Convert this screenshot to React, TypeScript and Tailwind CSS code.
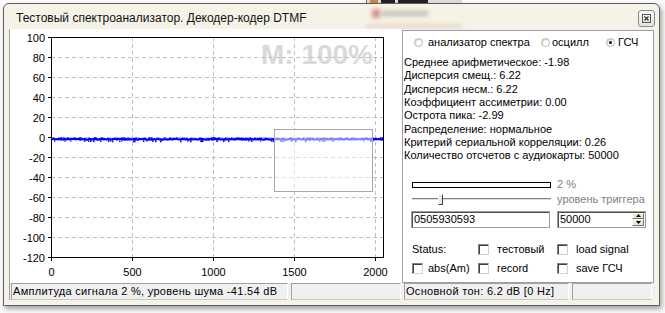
import React from 'react';

function rng(seed: number) {
  let s = seed >>> 0;
  return () => {
    s = (Math.imul(s, 1664525) + 1013904223) >>> 0;
    return s / 4294967296;
  };
}

function Chart() {
  const X0 = 42;
  const X1 = 374;
  const Y0 = 8;
  const xs = (v: number) => X0 + (v * (X1 - X0)) / 2048;
  const ys = (v: number) => Y0 + (100 - v);
  const yVals = [100, 80, 60, 40, 20, 0, -20, -40, -60, -80, -100, -120];
  const xVals = [0, 500, 1000, 1500, 2000];
  const r = rng(11);
  let d = '';
  const specks: { x: number; y: number; h: number }[] = [];
  for (let x = X0; x <= X1; x += 1) {
    const y = 110.2 + (r() - 0.5) * 0.9;
    d += (x === X0 ? 'M' : 'L') + x + ' ' + y.toFixed(2) + ' ';
    if (r() < 0.3) specks.push({ x, y: 110.2 + (r() < 0.5 ? -1.8 : 1.2), h: 1 + r() });
  }
  return (
    <svg width="393" height="254" className="block" style={{ fontFamily: '"Liberation Sans", Arial, sans-serif' }}>
      <rect x="0" y="0" width="393" height="254" fill="#ffffff" />
      <line x1="0.5" y1="0" x2="0.5" y2="254" stroke="#a0a0a0" />
      <text x="364" y="35" textAnchor="end" fontSize="28" fontWeight="bold" fill="#d9d9d9">
        M: 100%
      </text>
      {yVals.slice(1, -1).map((v) => (
        <line key={'h' + v} x1={X0} x2={X1} y1={ys(v) + 0.5} y2={ys(v) + 0.5} stroke="#c0c0c0" strokeDasharray="4 3" />
      ))}
      {xVals.slice(1).map((v) => (
        <line key={'v' + v} x1={Math.round(xs(v)) + 0.5} x2={Math.round(xs(v)) + 0.5} y1={Y0} y2={ys(-120)} stroke="#c0c0c0" strokeDasharray="4 3" />
      ))}
      <path d={d} fill="none" stroke="#0000ff" strokeWidth="2.2" />
      {specks.map((s, i) => (
        <rect key={i} x={s.x} y={s.y} width="1.5" height={s.h} fill="#0000ff" />
      ))}
      <rect x="265.5" y="100.5" width="98" height="62" fill="#ffffff" fillOpacity="0.5" stroke="#a8a8a8" />
      <rect x={X0 + 0.5} y={Y0 + 0.5} width={X1 - X0} height={ys(-120) - Y0} fill="none" stroke="#000000" />
      {yVals.map((v) => (
        <g key={'yl' + v}>
          <line x1={X0 - 3} x2={X0} y1={ys(v) + 0.5} y2={ys(v) + 0.5} stroke="#000" />
          <text x={X0 - 6} y={ys(v) + 4.5} textAnchor="end" fontSize="11" fill="#000">
            {v}
          </text>
        </g>
      ))}
      {xVals.map((v) => (
        <g key={'xl' + v}>
          <line x1={Math.round(xs(v)) + 0.5} x2={Math.round(xs(v)) + 0.5} y1={ys(-120)} y2={ys(-120) + 4} stroke="#000" />
          <text x={Math.round(xs(v)) + 0.5} y={247} textAnchor="middle" fontSize="11" fill="#000">
            {v}
          </text>
        </g>
      ))}
    </svg>
  );
}

function Radio({ checked }: { checked?: boolean }) {
  return (
    <span className="flex h-[9px] w-[9px] shrink-0 items-center justify-center rounded-full border border-[#b4b4b4] bg-white shadow-[inset_1px_1px_1px_#d6d6d6]">
      {checked && <span className="h-[3px] w-[3px] rounded-full bg-black" />}
    </span>
  );
}

function Check() {
  return (
    <span className="block h-[11px] w-[11px] shrink-0 border border-t-[#808080] border-l-[#808080] border-r-[#d0d0d0] border-b-[#d0d0d0] bg-white shadow-[inset_1px_1px_0_#404040]" />
  );
}

export default function App() {
  const stats = [
    'Среднее арифметическое: -1.98',
    'Дисперсия смещ.: 6.22',
    'Дисперсия несм.: 6.22',
    'Коэффициент ассиметрии: 0.00',
    'Острота пика: -2.99',
    'Распределение: нормальное',
    'Критерий сериальной корреляции: 0.26',
    'Количество отсчетов с аудиокарты: 50000',
  ];
  return (
    <div className="relative h-[313px] w-[665px] overflow-hidden bg-[#fafafa] font-['Liberation_Sans',Arial,sans-serif] text-[11px] text-black">
      {/* background window edge */}
      <div className="absolute left-[366px] top-[-9px] flex h-[13px] w-[96px] items-end gap-[3px] border-l border-[#707070] bg-[#dcdcdc] pb-[1px] pl-[3px]">
        <span className="h-[9px] w-[8px] bg-[#c78a3a]" />
        <span className="h-[3px] w-[14px] bg-[#222]" />
        <span className="h-[3px] w-[30px] bg-[#222]" />
      </div>

      {/* window */}
      <div className="absolute left-[3px] top-[3px] flex h-[303px] w-[657px] flex-col rounded-t-[6px] border border-[#5e5e5e] bg-[#f5f3e7] px-[5px] shadow-[2px_3px_5px_rgba(0,0,0,0.35)]">
        {/* blurred glass content */}
        <div className="absolute left-[368px] top-[5px] h-[9px] w-[8px] bg-[#c0504d] opacity-60 blur-[2px]" />
        <div className="absolute left-[378px] top-[7px] h-[5px] w-[46px] bg-[#707070] opacity-40 blur-[2px]" />
        <div className="absolute left-[362px] top-[20px] h-[4px] w-[96px] bg-[#c08080] opacity-25 blur-[2px]" />

        {/* title bar */}
        <div className="relative flex h-[25px] shrink-0 items-center justify-between pt-[3px]">
          <span className="pl-[7px] text-[12px] leading-[14px] text-[#111]">Тестовый спектроанализатор. Декодер-кодер DTMF</span>
          <span className="mr-[-1px] flex h-[17px] w-[17px] items-center justify-center rounded-[3px] border border-[#8a8a8a] bg-gradient-to-b from-[#fafaf6] to-[#e6e4da]">
            <svg width="9" height="9" viewBox="0 0 9 9">
              <rect x="0.5" y="0.5" width="8" height="8" fill="none" stroke="#555" />
              <path d="M2.5 2.5 L6.5 6.5 M6.5 2.5 L2.5 6.5" stroke="#333" strokeWidth="1.2" />
            </svg>
          </span>
        </div>

        {/* client */}
        <div className="flex flex-col bg-[#f0f0f0]">
          <div className="flex h-[254px]">
            <div className="w-[393px] shrink-0">
              <Chart />
            </div>
            <div className="mt-[1px] flex flex-1 flex-col border border-[#a0a0a0] bg-white">
              {/* radio row */}
              <div className="flex h-[23px] shrink-0 items-center whitespace-nowrap">
                <span className="ml-[11px] flex w-[127px] shrink-0 items-center">
                  <Radio />
                  <span className="ml-[5px]">анализатор спектра</span>
                </span>
                <span className="flex w-[65px] shrink-0 items-center">
                  <Radio />
                  <span className="ml-[2px]">осцилл</span>
                </span>
                <span className="flex items-center">
                  <Radio checked />
                  <span className="ml-[3px]">ГСЧ</span>
                </span>
              </div>
              {/* stats */}
              <div className="pl-[1px] pt-[2px] leading-[13.33px]">
                {stats.map((s) => (
                  <div key={s} className="whitespace-nowrap">
                    {s}
                  </div>
                ))}
              </div>
              {/* controls */}
              <div className="mt-[16px] flex h-[12px] items-center">
                <span className="ml-[9px] h-[6px] w-[139px] border border-black bg-white" />
                <span className="ml-[6px] text-[#808080]">2 %</span>
              </div>
              <div className="mt-[3px] flex h-[12px] items-center">
                <span className="relative ml-[9px] flex h-[12px] w-[139px] items-center">
                  <span className="block h-[3px] w-full border-t border-[#808080] border-b border-b-white bg-[#dcdcdc]" />
                  <span className="absolute left-[26px] top-[0px] h-[11px] w-[5px] border border-t-white border-l-white border-r-[#404040] border-b-[#404040] bg-[#ece9d8]" />
                </span>
                <span className="ml-[6px] text-[#808080]">уровень триггера</span>
              </div>
              <div className="mt-[5px] flex h-[17px] items-center">
                <span className="ml-[8px] flex h-[17px] w-[139px] items-center border border-[#9c9c9c] bg-white pl-[2px] shadow-[inset_1px_1px_0_#505050]">
                  0505930593
                </span>
                <span className="ml-[7px] flex h-[17px] w-[89px] items-center justify-between border border-[#9c9c9c] bg-white pl-[2px] shadow-[inset_1px_1px_0_#505050]">
                  <span>50000</span>
                  <span className="mr-[1px] flex h-[13px] w-[12px] flex-col">
                    <span className="flex h-[6.5px] items-center justify-center border border-t-white border-l-white border-r-[#707070] border-b-[#707070] bg-[#ece9d8]">
                      <svg width="5" height="3" viewBox="0 0 5 3">
                        <path d="M0 3 L2.5 0 L5 3 Z" fill="#000" />
                      </svg>
                    </span>
                    <span className="flex h-[6.5px] items-center justify-center border border-t-white border-l-white border-r-[#707070] border-b-[#707070] bg-[#ece9d8]">
                      <svg width="5" height="3" viewBox="0 0 5 3">
                        <path d="M0 0 L2.5 3 L5 0 Z" fill="#000" />
                      </svg>
                    </span>
                  </span>
                </span>
              </div>
              <div className="mt-[16px] flex h-[12px] items-center">
                <span className="ml-[9px] w-[66px]">Status:</span>
                <span className="flex w-[79px] items-center">
                  <Check />
                  <span className="ml-[8px]">тестовый</span>
                </span>
                <span className="flex items-center">
                  <Check />
                  <span className="ml-[8px]">load signal</span>
                </span>
              </div>
              <div className="mt-[7px] flex h-[12px] items-center">
                <span className="ml-[9px] flex w-[66px] items-center">
                  <Check />
                  <span className="ml-[5px]">abs(Am)</span>
                </span>
                <span className="flex w-[79px] items-center">
                  <Check />
                  <span className="ml-[8px]">record</span>
                </span>
                <span className="flex items-center">
                  <Check />
                  <span className="ml-[8px]">save ГСЧ</span>
                </span>
              </div>
            </div>
          </div>
          {/* status bar */}
          <div className="flex h-[17px] items-stretch gap-[3px] border-l border-[#a0a0a0] bg-[#f0f0f0] pl-[1px] pr-[2px]">
            <div className="flex w-[277px] items-center border border-t-[#a0a0a0] border-l-[#a0a0a0] border-r-[#ffffff] border-b-[#c8c8c8] pl-[1px] tracking-[0.3px] whitespace-nowrap">
              Амплитуда сигнала 2 %, уровень шума -41.54 dB
            </div>
            <div className="w-[110px] border border-t-[#a0a0a0] border-l-[#a0a0a0] border-r-[#ffffff] border-b-[#c8c8c8]" />
            <div className="flex w-[165px] items-center border border-t-[#a0a0a0] border-l-[#a0a0a0] border-r-[#ffffff] border-b-[#c8c8c8] pl-[1px] tracking-[0.3px] whitespace-nowrap">
              Основной тон: 6.2 dB [0 Hz]
            </div>
            <div className="flex-1 border border-t-[#a0a0a0] border-l-[#a0a0a0] border-r-[#ffffff] border-b-[#c8c8c8]" />
          </div>
        </div>
      </div>
    </div>
  );
}
